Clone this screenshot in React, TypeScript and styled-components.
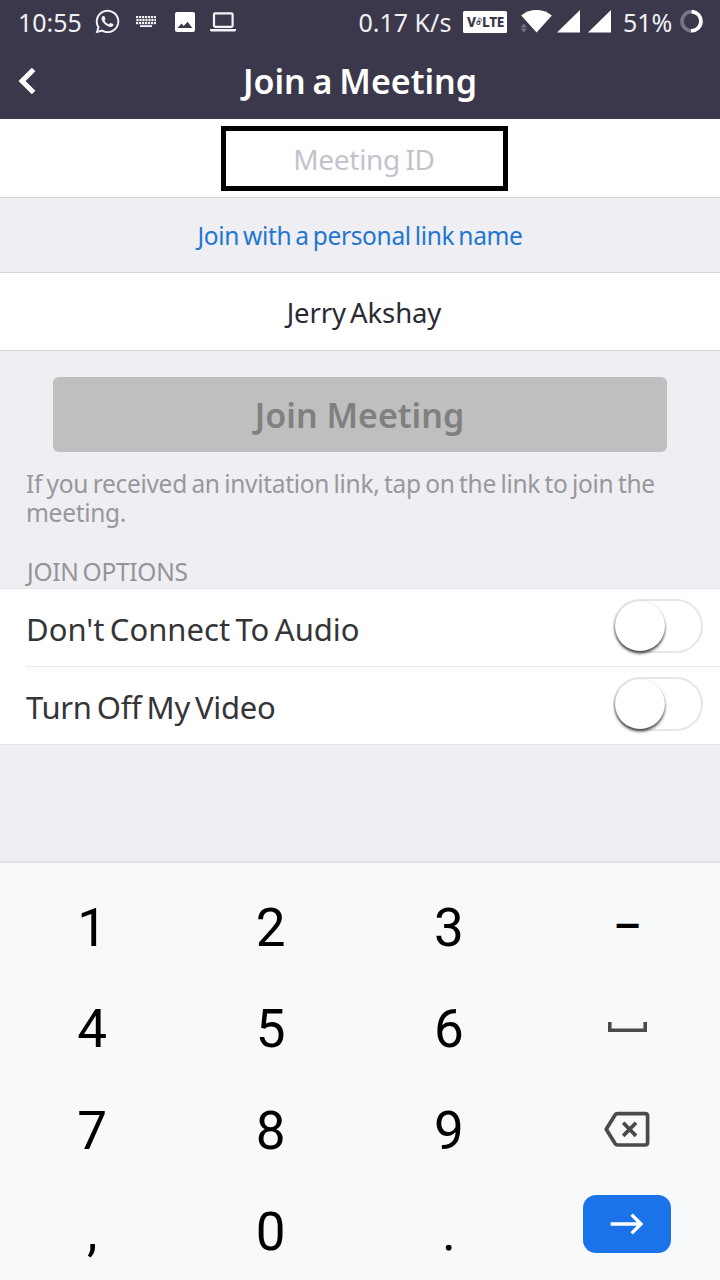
import React from 'react';
import styled, { createGlobalStyle } from 'styled-components';
import { FaWhatsapp } from 'react-icons/fa';

const Global = createGlobalStyle`
  *, *::before, *::after { box-sizing: border-box; }
  body { margin: 0; background: #eeeef3; }
  button, input { font: inherit; border: 0; margin: 0; padding: 0; background: none; }
`;

const Screen = styled.div`
  width: 720px;
  height: 1280px;
  overflow: hidden;
  display: flex;
  flex-direction: column;
  background: #eeeef3;
  font-family: 'Noto Sans', sans-serif;
  font-weight: 400;
`;

const TopArea = styled.header`
  height: 119px;
  flex: none;
  background: #3b384c;
  color: #fff;
`;

const StatusBar = styled.div`
  height: 43px;
  padding: 0 16px 0 18px;
  display: flex;
  justify-content: space-between;
  font-size: 25px;
  line-height: 43px;
  color: #f0f0f3;
`;

const StatusGroup = styled.div`
  display: flex;
  align-items: center;
  white-space: pre;
`;

const StatusItem = styled.span<{ $gap?: number }>`
  display: flex;
  flex: none;
  margin-left: ${(p) => p.$gap ?? 0}px;
`;

const StatusText = styled.span<{ $gap?: number; $width: number }>`
  flex: none;
  width: ${(p) => p.$width}px;
  margin-left: ${(p) => p.$gap ?? 0}px;
  padding-top: 1px;
`;

const VolteBadge = styled.span`
  width: 44px;
  height: 22px;
  margin-left: 11.5px;
  padding: 0 3px 0 4px;
  display: flex;
  align-items: center;
  justify-content: space-between;
  border-radius: 1.5px;
  background: #fff;
  color: #3b384c;
  font-size: 13.5px;
  font-weight: 800;
  line-height: 22px;
  letter-spacing: -0.3px;
`;

const TitleBar = styled.div`
  height: 76px;
  padding: 0 18px;
  display: grid;
  grid-template-columns: 60px 1fr 60px;
  align-items: center;
`;

const BackButton = styled.button`
  display: flex;
  color: #fff;
`;

const Title = styled.h1`
  margin: 0;
  text-align: center;
  font-size: 34px;
  font-weight: 650;
  line-height: 76px;
  word-spacing: -2px;
  white-space: nowrap;
`;

const FieldRow = styled.div<{ $height: number }>`
  height: ${(p) => p.$height}px;
  flex: none;
  padding-left: 9px;
  display: flex;
  align-items: center;
  justify-content: center;
  background: #fff;
  border-bottom: 1px solid #d4d4d8;
`;

const MeetingIdFrame = styled.div`
  width: 287px;
  height: 65px;
  border: 5px solid #000;
  display: flex;
`;

const MeetingIdInput = styled.input`
  width: 100%;
  padding: 2px 1px 0 0;
  text-align: center;
  font-size: 28px;
  letter-spacing: -0.3px;
  word-spacing: -1.6px;
  outline: 0;
  &::placeholder { color: #c3c3cc; opacity: 1; }
`;

const LinkRow = styled.button`
  height: 75px;
  flex: none;
  padding-top: 2px;
  border-bottom: 1px solid #d4d4d8;
  color: #2376cf;
  font-size: 24.5px;
  line-height: 72px;
  letter-spacing: -0.34px;
  word-spacing: -2px;
`;

const UserName = styled.span`
  font-size: 27.5px;
  line-height: 75px;
  padding-top: 2px;
  letter-spacing: -0.1px;
  word-spacing: -3px;
  color: #2a2a33;
  margin-right: 1px;
`;

const JoinButton = styled.button`
  width: 614px;
  height: 75px;
  flex: none;
  margin: 26px 0 0 53px;
  padding: 2px 1px 0 0;
  border-radius: 6px;
  background: #bfbfbf;
  color: #808080;
  font-size: 34px;
  font-weight: 600;
  line-height: 73px;
`;

const Hint = styled.p`
  margin: 17px 26px 0;
  font-size: 24.5px;
  line-height: 29px;
  letter-spacing: -0.3px;
  word-spacing: -1.6px;
  color: #98989c;
`;

const SectionLabel = styled.h2`
  margin: 28px 0 -1px 27px;
  font-size: 24.5px;
  font-weight: inherit;
  line-height: 34px;
  letter-spacing: -0.3px;
  word-spacing: -2px;
  color: #949498;
`;

const OptionList = styled.div`
  flex: none;
  background: #fff;
  border-top: 1px solid #e4e4e8;
  border-bottom: 1px solid #e4e4e8;
`;

const OptionRow = styled.div<{ $divided?: boolean }>`
  height: ${(p) => (p.$divided ? 78 : 77)}px;
  margin-left: 26px;
  padding-right: 17px;
  display: flex;
  align-items: center;
  justify-content: space-between;
  border-bottom: ${(p) => (p.$divided ? '1px solid #e9e9eb' : '0')};
`;

const OptionLabel = styled.span<{ $tracking: number }>`
  padding-top: 3px;
  font-size: 31px;
  line-height: 74px;
  letter-spacing: ${(p) => p.$tracking}px;
  word-spacing: -2.6px;
  color: #353538;
`;

const Toggle = styled.button`
  width: 90px;
  height: 54px;
  margin-bottom: 3px;
  display: flex;
  align-items: center;
  border: 2.5px solid #e6e6e6;
  border-radius: 27px;
  background: #fff;
`;

const Knob = styled.span`
  width: 50px;
  height: 50px;
  border-radius: 50%;
  background: #fff;
  box-shadow: 0 2.5px 3px rgba(0, 0, 0, 0.7), 0 0 1px rgba(0, 0, 0, 0.15);
`;

const Keyboard = styled.div`
  height: 417px;
  flex: none;
  margin-top: auto;
  padding: 13px 4px 0 3px;
  display: grid;
  grid-template-columns: repeat(4, 178.4px);
  grid-template-rows: repeat(4, 101.3px);
  background: #f8f9fb;
  box-shadow: 0 -1px 1px 1px #e3e4e8;
`;

const Key = styled.button`
  display: flex;
  align-items: center;
  justify-content: center;
  color: #000;
`;

const CharKey = styled(Key)`
  padding-top: 3px;
  font-family: Roboto, sans-serif;
  font-size: 53px;
  line-height: 98px;
`;

const DashKey = styled(Key)`
  font-family: Roboto, sans-serif;
  font-size: 44px;
  font-weight: 500;
`;

const EnterFace = styled.span`
  width: 88px;
  height: 58px;
  margin-bottom: 13px;
  display: flex;
  align-items: center;
  justify-content: center;
  border-radius: 13px;
  background: #1a73e8;
`;

const KeyboardIcon = () => (
  <svg width="20" height="12" viewBox="0 0 20 12" fill="#f4f4f6">
    {[0, 3, 6].map((y, r) =>
      [0, 3, 6, 9, 12, 15, 18].map((x) => (
        <rect key={`${x}-${y}`} x={x + (r === 1 ? 0.4 : 0)} y={y} width="2.2" height="2.2" />
      )),
    )}
    <rect x="4" y="9.2" width="12" height="1.8" />
  </svg>
);

const PictureIcon = () => (
  <svg width="20" height="20" viewBox="0 0 20 20">
    <rect width="20" height="20" rx="2" fill="#fff" />
    <path d="M2.5 16 6.5 11.6 8.6 14 12.6 9.8 17.3 16Z" fill="#3b384c" />
  </svg>
);

const LaptopIcon = () => (
  <svg width="26" height="20" viewBox="0 0 26 20">
    <rect x="4" y="1.4" width="18.6" height="13.4" rx="1.2" fill="none" stroke="#f4f4f6" strokeWidth="2.2" />
    <path d="M0 17H26V18Q26 19.4 24.8 19.4H1.2Q0 19.4 0 18Z" fill="#f4f4f6" />
  </svg>
);

const VolteMark = () => (
  <svg width="9" height="13" viewBox="0 0 9 13" fill="none" stroke="#3b384c">
    <circle cx="3.4" cy="8.6" r="2.2" strokeWidth="1.6" />
    <path d="M2.4 4.2Q5.6 3.6 6.4 7.2M3 1.6Q7.6 1.4 8.3 5.6" strokeWidth="1.1" />
  </svg>
);

const WifiIcon = () => (
  <svg width="33" height="24" viewBox="0 0 33 24">
    <path d="M1.2 5.4Q8 0 16.4 0T31.8 5.4L16.6 22.4Z" fill="#fff" />
    <path d="M.8 17.4 3.8 13.4 6.8 17.4ZM.8 18.8H6.8L3.8 22.4Z" fill="#77758a" />
  </svg>
);

const SignalIcon = () => (
  <svg width="23" height="24" viewBox="0 0 23 24">
    <path d="M23 0V22.6H0Z" fill="#fff" />
  </svg>
);

const BatteryRing = () => (
  <svg width="24" height="24" viewBox="0 0 24 24" fill="none" strokeWidth="3.6">
    <circle cx="11.6" cy="11.2" r="9.6" stroke="#777588" />
    <path d="M11.6 1.6A9.6 9.6 0 1 1 11 20.8" stroke="#fff" />
  </svg>
);

const BackIcon = () => (
  <svg width="18" height="28" viewBox="0 0 18 28">
    <path d="M15.6 2.4 4 14 15.6 25.6" fill="none" stroke="#fff" strokeWidth="5" />
  </svg>
);

const SpaceIcon = () => (
  <svg width="42" height="12" viewBox="0 0 42 12">
    <path d="M3.8 0V8.2H39.2V0" fill="none" stroke="#4a4b4d" strokeWidth="3.6" />
  </svg>
);

const BackspaceIcon = () => (
  <svg width="46" height="36" viewBox="0 0 46 36" fill="none" stroke="#4a4b4d" strokeWidth="3.7">
    <path d="M13.5 2.6H41Q43.6 2.6 43.6 5.2V31.3Q43.6 34 41 34H13.5Q12 34 11.2 32.8L2.2 18.3 11.2 3.8Q12 2.6 13.5 2.6Z" strokeLinejoin="round" />
    <path d="M19.2 11.7 32 24.9M32 11.7 19.2 24.9" />
  </svg>
);

const ArrowIcon = () => (
  <svg width="34" height="22" viewBox="0 0 34 22" fill="none" stroke="#fff" strokeWidth="3.4">
    <path d="M.6 11H31M21.6 1.6 31 11 21.6 20.4" />
  </svg>
);

const rows = [
  ['1', '2', '3'],
  ['4', '5', '6'],
  ['7', '8', '9'],
  [',', '0', '.'],
];

const sideKeys = [
  <DashKey key="dash">–</DashKey>,
  <Key key="space" aria-label="Space"><SpaceIcon /></Key>,
  <Key key="backspace" aria-label="Backspace"><BackspaceIcon /></Key>,
  <Key key="enter" aria-label="Enter"><EnterFace><ArrowIcon /></EnterFace></Key>,
];

export default function App() {
  return (
    <Screen>
      <Global />
      <TopArea>
        <StatusBar>
          <StatusGroup>
            <StatusText $width={64}>10:55</StatusText>
            <StatusItem $gap={12}><FaWhatsapp size={27} /></StatusItem>
            <StatusItem $gap={15}><KeyboardIcon /></StatusItem>
            <StatusItem $gap={19}><PictureIcon /></StatusItem>
            <StatusItem $gap={15}><LaptopIcon /></StatusItem>
          </StatusGroup>
          <StatusGroup>
            <StatusText $width={93}>0.17 K/s</StatusText>
            <VolteBadge><span>V</span><VolteMark /><span>LTE</span></VolteBadge>
            <StatusItem $gap={13}><WifiIcon /></StatusItem>
            <StatusItem $gap={4}><SignalIcon /></StatusItem>
            <StatusItem $gap={8}><SignalIcon /></StatusItem>
            <StatusText $gap={12} $width={49.4}>51%</StatusText>
            <StatusItem $gap={7.6}><BatteryRing /></StatusItem>
          </StatusGroup>
        </StatusBar>
        <TitleBar>
          <BackButton aria-label="Back"><BackIcon /></BackButton>
          <Title>Join a Meeting</Title>
        </TitleBar>
      </TopArea>
      <FieldRow $height={79}>
        <MeetingIdFrame><MeetingIdInput placeholder="Meeting ID" /></MeetingIdFrame>
      </FieldRow>
      <LinkRow>Join with a personal link name</LinkRow>
      <FieldRow $height={78}><UserName>Jerry Akshay</UserName></FieldRow>
      <JoinButton>Join Meeting</JoinButton>
      <Hint>If you received an invitation link, tap on the link to join the meeting.</Hint>
      <SectionLabel>JOIN OPTIONS</SectionLabel>
      <OptionList>
        <OptionRow $divided>
          <OptionLabel $tracking={0}>Don't Connect To Audio</OptionLabel>
          <Toggle aria-label="Don't Connect To Audio"><Knob /></Toggle>
        </OptionRow>
        <OptionRow>
          <OptionLabel $tracking={-0.3}>Turn Off My Video</OptionLabel>
          <Toggle aria-label="Turn Off My Video"><Knob /></Toggle>
        </OptionRow>
      </OptionList>
      <Keyboard>
        {rows.map((row, i) => (
          <React.Fragment key={i}>
            {row.map((label) => <CharKey key={label}>{label}</CharKey>)}
            {sideKeys[i]}
          </React.Fragment>
        ))}
      </Keyboard>
    </Screen>
  );
}
